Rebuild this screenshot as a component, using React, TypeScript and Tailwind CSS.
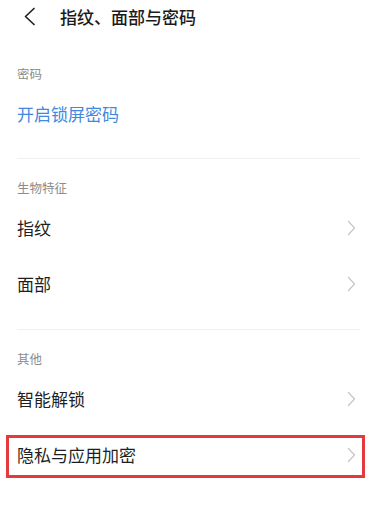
const font = { fontFamily: '"Noto Sans CJK SC", "Noto Sans", sans-serif' };

function Chevron() {
  return (
    <svg width="9" height="16" viewBox="0 0 9 16" fill="none" className="shrink-0">
      <path d="M1.5 1.5 L7.5 8 L1.5 14.5" stroke="#c9c9c9" strokeWidth="1.4" strokeLinecap="round" strokeLinejoin="round" />
    </svg>
  );
}

function BackArrow() {
  return (
    <svg width="13" height="19" viewBox="0 0 13 19" fill="none" className="ml-[23px] shrink-0">
      <path d="M11 1.5 L2.5 9.5 L11 17.5" stroke="#222" strokeWidth="1.7" strokeLinecap="round" strokeLinejoin="round" />
    </svg>
  );
}

function SectionLabel({ children }: { children: string }) {
  return <div className="flex h-6 items-center px-[17px] text-[12.5px] text-[#8c8c8c]">{children}</div>;
}

function Row({ label, arrow = true, blue = false, highlight = false }: { label: string; arrow?: boolean; blue?: boolean; highlight?: boolean }) {
  return (
    <div className="relative flex h-14 items-center justify-between pl-[17px] pr-[27px]">
      <span className={blue ? "text-[17px] text-[#4189e0]" : "text-[17px] text-[#1f1f1f]"}>{label}</span>
      {arrow ? <Chevron /> : null}
      {highlight ? (
        <div className="pointer-events-none absolute left-[6px] right-[18px] top-[8px] h-[43px] border-[3px] border-[#e5393d]" />
      ) : null}
    </div>
  );
}

function Divider() {
  return <div className="ml-[17px] mr-[23px] h-px bg-[#f0f0f0]" />;
}

export default function App() {
  return (
    <div className="min-h-[513px] w-[383px] bg-white" style={font}>
      <div className="flex h-[33px] items-center">
        <BackArrow />
        <span className="ml-[24px] text-[17px] font-medium text-[#1a1a1a]">指纹、面部与密码</span>
      </div>
      <div className="mt-[29px]">
        <SectionLabel>密码</SectionLabel>
        <Row label="开启锁屏密码" arrow={false} blue />
      </div>
      <div className="mt-4">
        <Divider />
      </div>
      <div className="mt-[17px]">
        <SectionLabel>生物特征</SectionLabel>
        <Row label="指纹" />
        <Row label="面部" />
      </div>
      <div className="mt-[17px]">
        <Divider />
      </div>
      <div className="mt-[17px]">
        <SectionLabel>其他</SectionLabel>
        <Row label="智能解锁" />
        <Row label="隐私与应用加密" highlight />
      </div>
    </div>
  );
}
